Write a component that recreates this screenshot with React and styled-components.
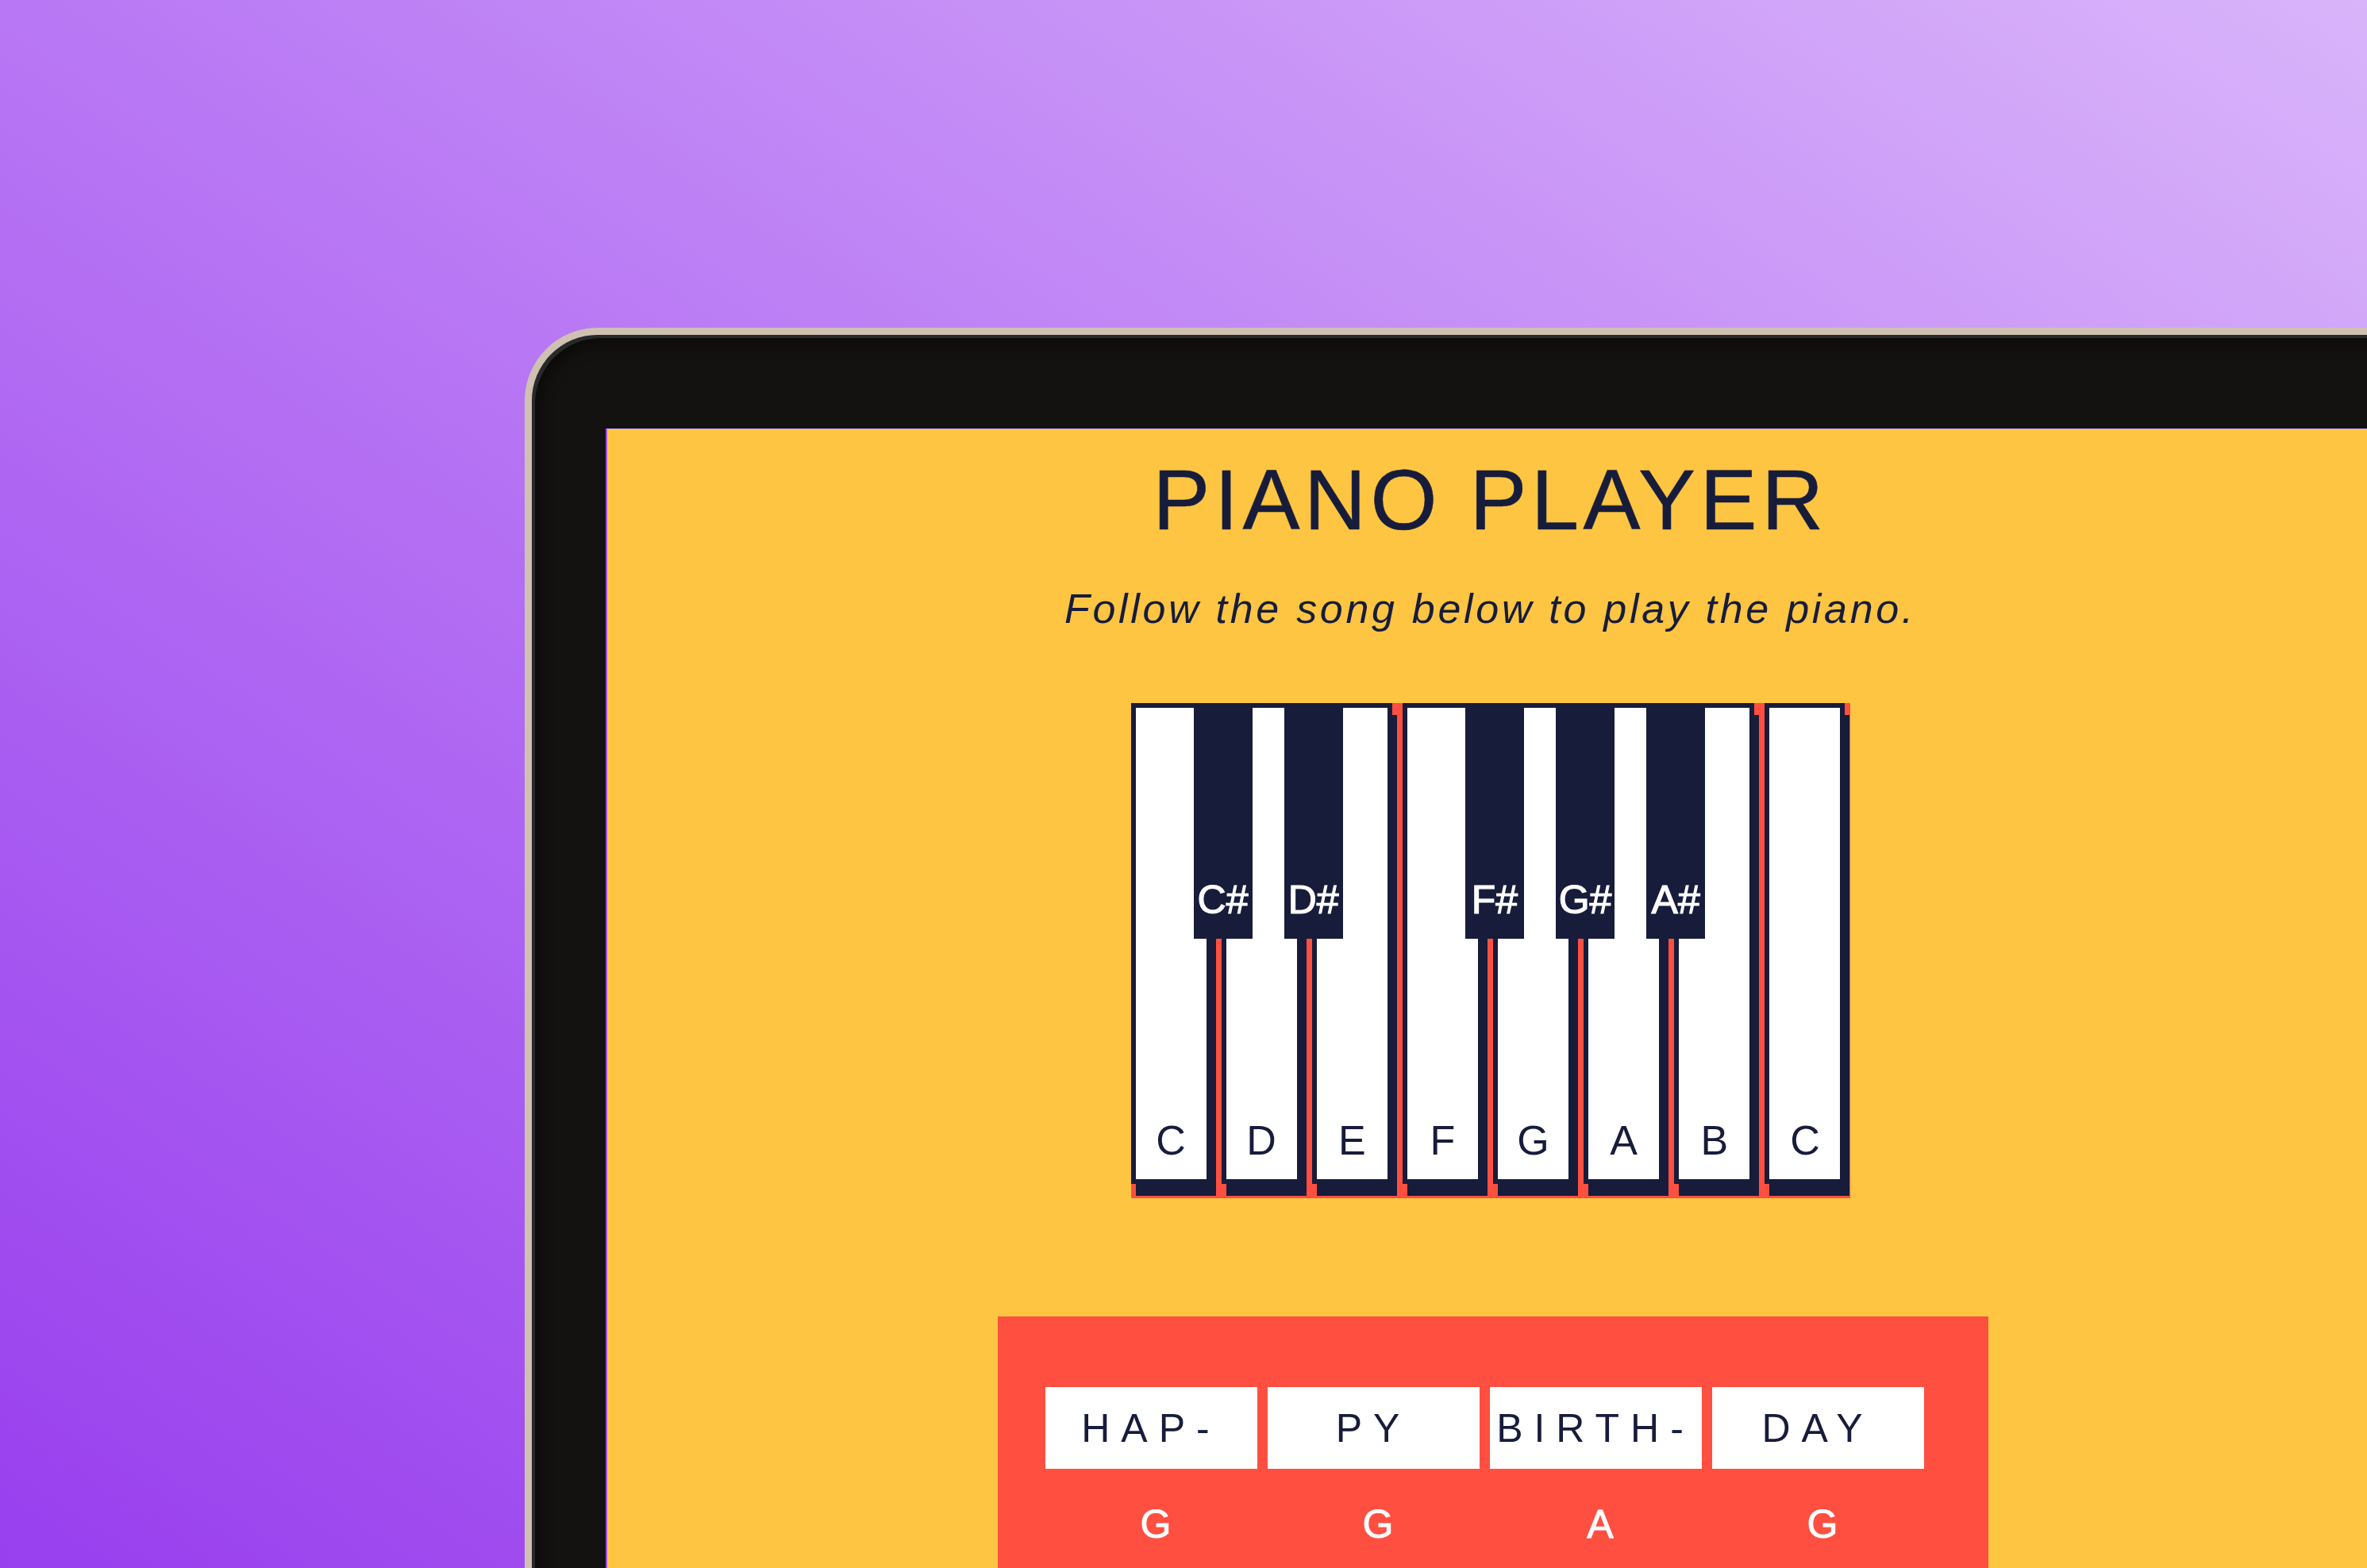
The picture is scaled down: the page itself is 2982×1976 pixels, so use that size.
import React from "react";
import styled, { createGlobalStyle } from "styled-components";

const NAVY = "#171c3b";
const RED = "#ff4f40";
const YELLOW = "#fec542";

const GlobalStyle = createGlobalStyle`
   html, body {
      margin: 0;
      padding: 0;
      overflow: hidden;
   }
   body {
      font-family: "Liberation Sans", Arial, sans-serif;
   }
`;

const Stage = styled.div`
   width: 2982px;
   height: 1976px;
   overflow: hidden;
   box-sizing: border-box;
   padding: 413px 0 0 661px;
   background: linear-gradient(to top right, #983fee 0%, #b877f4 50%, #d9b4fa 100%);
`;

const Device = styled.div`
   width: 2430px;
   box-sizing: border-box;
   border: 9px solid #cfc1b2;
   border-right: 0;
   border-bottom: 0;
   border-radius: 92px 0 0 0;
   padding: 118px 0 0 93px;
   background: #141210;
   box-shadow: inset 4px 4px 0 #28292b, inset 10px 10px 18px rgba(0, 0, 0, 0.45);
`;

const Screen = styled.div`
   width: 2225px;
   min-height: 1500px;
   background: ${YELLOW};
   border-left: 2px solid #9c46f0;
   border-top: 1px solid #c79ff7;
   display: flex;
   flex-direction: column;
   align-items: center;
`;

const Title = styled.h1`
   margin: 35px 0 0;
   font-size: 108px;
   line-height: 108px;
   font-weight: 400;
   letter-spacing: 5.5px;
   color: ${NAVY};
   -webkit-text-stroke: 0.6px ${NAVY};
`;

const SubTitle = styled.p`
   margin: 57px 0 0;
   font-size: 52px;
   line-height: 52px;
   font-style: italic;
   letter-spacing: 3.7px;
   color: ${NAVY};
`;

const Keyboard = styled.div`
   position: relative;
   margin-top: 93px;
   width: 906px;
   height: 624px;
   box-sizing: border-box;
   padding-right: 6px;
   background: ${RED};
   display: flex;
   justify-content: space-between;
   align-items: flex-start;
`;

const WhiteKey = styled.div`
   position: relative;
   width: 101px;
   height: 606px;
   box-sizing: border-box;
   border: 6px solid ${NAVY};
   background: #fff;
   box-shadow: 6px 15px 0 ${NAVY};
   display: flex;
   flex-direction: column;
   justify-content: flex-end;
   align-items: center;
   padding-bottom: 23px;
   font-size: 52px;
   line-height: 52px;
   color: ${NAVY};
`;

const BlackKey = styled.div`
   position: absolute;
   z-index: 2;
   top: -6px;
   left: 73px;
   width: 74px;
   height: 297px;
   box-sizing: border-box;
   background: ${NAVY};
   display: flex;
   flex-direction: column;
   justify-content: flex-end;
   align-items: center;
   padding-bottom: 24px;
   font-size: 50px;
   line-height: 50px;
   color: #fff;
   -webkit-text-stroke: 1.2px #fff;
`;

const SongPanel = styled.div`
   margin: 149px 0 0 6px;
   width: 1248px;
   box-sizing: border-box;
   padding: 89px 81px 60px 60px;
   background: ${RED};
   display: grid;
   grid-template-columns: repeat(4, 267px);
   column-gap: 13px;
   row-gap: 45px;
`;

const Word = styled.div`
   height: 103px;
   background: #fff;
   display: flex;
   align-items: center;
   justify-content: center;
   font-size: 50px;
   line-height: 50px;
   letter-spacing: 14px;
   color: ${NAVY};
`;

const Note = styled.div`
   padding-left: 12px;
   text-align: center;
   font-size: 50px;
   line-height: 50px;
   color: #fff;
   -webkit-text-stroke: 1px #fff;
`;

const keys = [
   { note: "C", sharp: "C#" },
   { note: "D", sharp: "D#" },
   { note: "E" },
   { note: "F", sharp: "F#" },
   { note: "G", sharp: "G#" },
   { note: "A", sharp: "A#" },
   { note: "B" },
   { note: "C" },
];

const song = [
   { word: "HAP-", note: "G" },
   { word: "PY", note: "G" },
   { word: "BIRTH-", note: "A" },
   { word: "DAY", note: "G" },
];

const App = () => {
   return (
      <Stage>
         <GlobalStyle />
         <Device>
            <Screen>
               <Title>PIANO PLAYER</Title>
               <SubTitle>Follow the song below to play the piano.</SubTitle>

               <Keyboard>
                  {keys.map((k, i) => (
                     <WhiteKey key={i}>
                        {k.sharp && <BlackKey>{k.sharp}</BlackKey>}
                        {k.note}
                     </WhiteKey>
                  ))}
               </Keyboard>

               <SongPanel>
                  {song.map((s, i) => (
                     <Word key={"w" + i}>{s.word}</Word>
                  ))}
                  {song.map((s, i) => (
                     <Note key={"n" + i}>{s.note}</Note>
                  ))}
               </SongPanel>
            </Screen>
         </Device>
      </Stage>
   );
};

export default App;
